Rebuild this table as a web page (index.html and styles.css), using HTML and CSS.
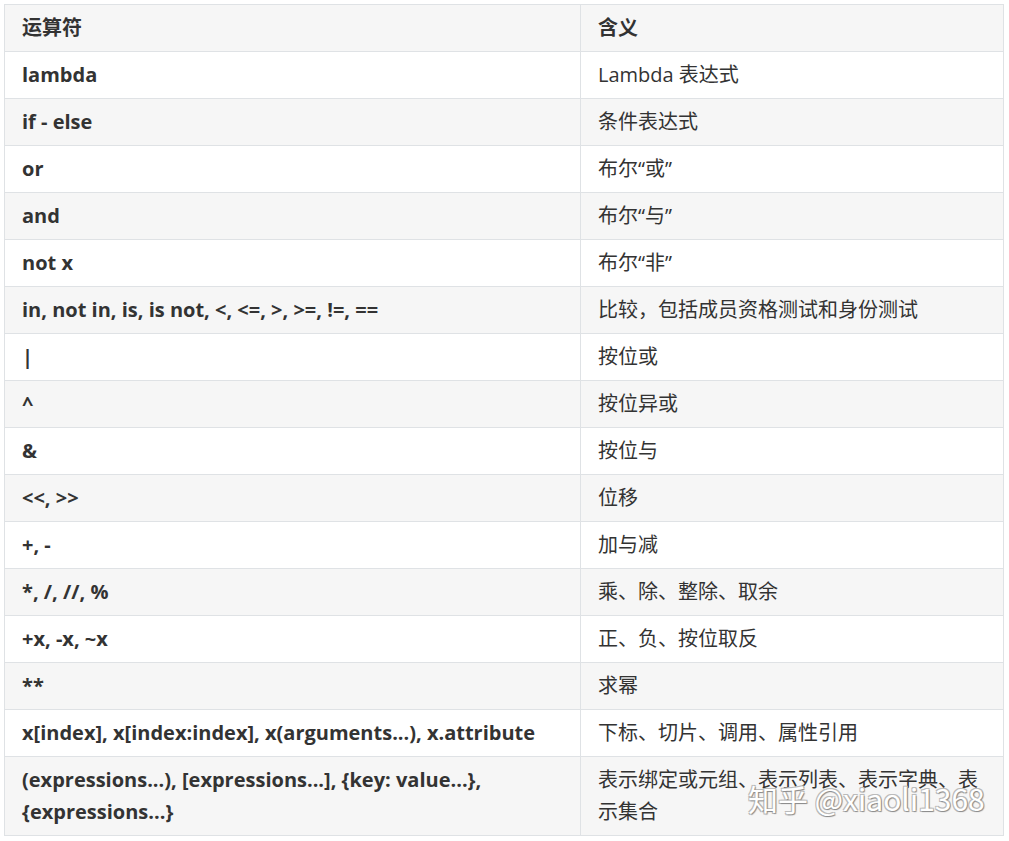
FILE: index.html
```html
<!DOCTYPE html>
<html lang="zh">
<head>
<meta charset="utf-8">
<link rel="stylesheet" href="styles.css">
</head>
<body>
<div class="wrap">
<table class="ops">
<thead>
<tr><th class="c1">运算符</th><th class="c2">含义</th></tr>
</thead>
<tbody>
<tr><td class="op">lambda</td><td>Lambda 表达式</td></tr>
<tr><td class="op">if - else</td><td>条件表达式</td></tr>
<tr><td class="op">or</td><td>布尔“或”</td></tr>
<tr><td class="op">and</td><td>布尔“与”</td></tr>
<tr><td class="op">not x</td><td>布尔“非”</td></tr>
<tr><td class="op">in, not in, is, is not, &lt;, &lt;=, &gt;, &gt;=, !=, ==</td><td>比较，包括成员资格测试和身份测试</td></tr>
<tr><td class="op">|</td><td>按位或</td></tr>
<tr><td class="op">^</td><td>按位异或</td></tr>
<tr><td class="op">&amp;</td><td>按位与</td></tr>
<tr><td class="op">&lt;&lt;, &gt;&gt;</td><td>位移</td></tr>
<tr><td class="op">+, -</td><td>加与减</td></tr>
<tr><td class="op">*, /, //, %</td><td>乘、除、整除、取余</td></tr>
<tr><td class="op">+x, -x, ~x</td><td>正、负、按位取反</td></tr>
<tr><td class="op">**</td><td>求幂</td></tr>
<tr><td class="op">x[index], x[index:index], x(arguments...), x.attribute</td><td>下标、切片、调用、属性引用</td></tr>
<tr><td class="op">(expressions...), [expressions...], {key: value...}, {expressions...}</td><td>表示绑定或元组、表示列表、表示字典、表示集合</td></tr>
</tbody>
</table>
<div class="watermark">知乎 @xiaoli1368</div>
</div>
</body>
</html>
```
FILE: styles.css
```css
html, body {
  margin: 0;
  padding: 0;
  background: #fff;
}
.wrap {
  position: relative;
  padding: 4px 5px 0 4px;
}
.ops {
  border-collapse: collapse;
  width: 1000px;
  font-family: "Open Sans", "Noto Sans CJK SC", sans-serif;
  font-size: 20px;
  line-height: 32px;
  color: #333;
}
.ops th, .ops td {
  border: 1px solid #dfe2e5;
  padding: 7px 16px 7px 17px;
  text-align: left;
  vertical-align: middle;
}
.ops th {
  font-weight: 700;
}
.ops .c1 {
  width: 542px;
}
.ops td.op {
  font-weight: 700;
}
.ops thead tr,
.ops tbody tr:nth-child(even) {
  background: #f6f6f6;
}
.watermark {
  position: absolute;
  left: 748px;
  top: 778px;
  font-family: "Noto Sans CJK SC", "Open Sans", sans-serif;
  font-size: 30px;
  line-height: 40px;
  color: #fff;
  text-shadow: 1px 1px 1px #8a8a8a, -1px -1px 0 #bbb, 1px -1px 0 #bbb, -1px 1px 0 #bbb;
}
```
